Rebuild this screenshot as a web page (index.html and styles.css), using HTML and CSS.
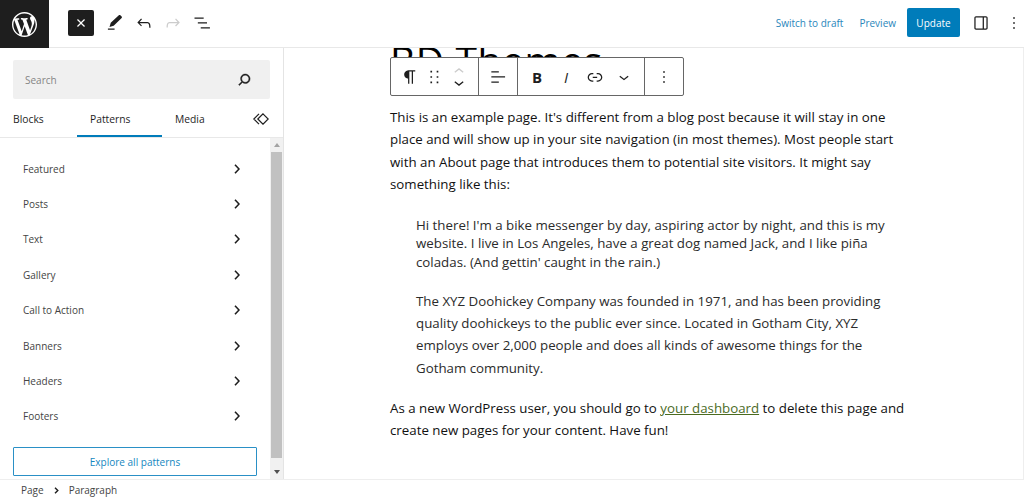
FILE: index.html
```html
<!DOCTYPE html>
<html lang="en">

<head>
    <meta charset="UTF-8">
    <meta name="viewport" content="width=device-width, initial-scale=1.0">
    <title>Edit Page</title>
    <link rel="stylesheet" href="styles.css">
</head>

<body>

    <header class="header">
        <div class="wp-logo">
            <svg viewBox="0 0 20 20" width="25" height="25"><path d="M20 10c0-5.51-4.49-10-10-10C4.48 0 0 4.49 0 10c0 5.52 4.48 10 10 10 5.51 0 10-4.48 10-10zM7.78 15.37L4.37 6.22c.55-.02 1.17-.08 1.17-.08.5-.06.44-1.13-.06-1.11 0 0-1.45.11-2.37.11-.18 0-.37 0-.58-.01C4.12 2.69 6.87 1.11 10 1.11c2.33 0 4.45.87 6.05 2.34-.68-.11-1.65.39-1.65 1.58 0 .74.45 1.36.9 2.1.35.61.55 1.36.55 2.46 0 1.49-1.4 5-1.4 5l-3.03-8.37c.54-.02.82-.17.82-.17.5-.05.44-1.25-.06-1.22 0 0-1.44.12-2.38.12-.87 0-2.33-.12-2.33-.12-.5-.03-.56 1.2-.06 1.22l.92.08 1.26 3.41zM17.41 10c.24-.64.74-1.87.43-4.25.7 1.29 1.05 2.71 1.05 4.25 0 3.29-1.73 6.24-4.4 7.78.97-2.59 1.94-5.2 2.92-7.78zM6.1 18.09C3.12 16.65 1.11 13.53 1.11 10c0-1.3.23-2.48.72-3.59C3.25 10.3 4.67 14.2 6.1 18.09zm4.03-6.63l2.58 6.98c-.86.29-1.76.45-2.71.45-.79 0-1.57-.11-2.29-.33.81-2.38 1.62-4.74 2.42-7.1z"/></svg>
        </div>
        <div class="tools">
            <button class="inserter-toggle">
                <svg viewBox="0 0 24 24" width="20" height="20"><path d="M12 13.06l3.712 3.713 1.061-1.06L13.061 12l3.712-3.712-1.06-1.06L12 10.938 8.288 7.227l-1.061 1.06L10.939 12l-3.712 3.712 1.06 1.061L12 13.061z"/></svg>
            </button>
            <svg class="icon" viewBox="0 0 24 24"><path d="M20 4.200l-1.600-1.600c-.6-.5-1.300-.4-1.800 0L6.900 11.700l-1.500 5 5-1.300L20 6c.5-.5.5-1.300 0-1.800zM11.500 18.600H3.500v1.500h8z"/></svg>
            <svg class="icon" viewBox="0 0 24 24"><path d="M18.3 11.7c-.6-.6-1.4-.9-2.3-.9H6.7l2.9-3.3-1.1-1-4.5 5L8.5 16l1-1-2.7-2.700H16c.5 0 .9.2 1.300.5 1 1 1 3.400 1 4.500v.3h1.500v-.2c0-1.500 0-4.300-1.500-5.700z"/></svg>
            <svg class="icon disabled" viewBox="0 0 24 24"><path d="M15.6 6.5l-1.1 1 2.9 3.3H8c-.9 0-1.7.3-2.3.9-1.4 1.5-1.4 4.2-1.4 5.6v.2h1.5v-.3c0-1.1 0-3.5 1-4.5.3-.3.7-.5 1.3-.5h9.2L14.5 15l1.1 1.1 4.6-4.6-4.6-5z"/></svg>
            <svg class="icon" viewBox="0 0 24 24"><path d="M3 5.5h11V7H3zM7 11.2h11v1.500H7zM10.500 17h11v1.500h-11z"/></svg>
        </div>
        <div class="settings">
            <a class="link">Switch to draft</a>
            <a class="link">Preview</a>
            <button class="update-button">Update</button>
            <svg class="icon" viewBox="0 0 24 24"><path d="M18 4H6c-1.1 0-2 .9-2 2v12c0 1.1.9 2 2 2h12c1.1 0 2-.9 2-2V6c0-1.1-.9-2-2-2zm-4 14.5H6c-.3 0-.5-.2-.5-.5V6c0-.3.2-.5.5-.5h8v13zm4.5-.5c0 .3-.2.5-.5.5h-2.500v-13H18c.3 0 .5.2.5.5v12z"/></svg>
            <svg class="icon" viewBox="0 0 24 24"><path d="M13 19h-2v-2h2v2zm0-6h-2v-2h2v2zm0-6h-2V5h2v2z"/></svg>
        </div>
    </header>

    <main class="main">
        <aside class="sidebar">
            <div class="search">
                <span>Search</span>
                <svg viewBox="0 0 24 24" width="19" height="19"><path stroke="currentColor" stroke-width=".5" d="M13 5c-3.3 0-6 2.7-6 6 0 1.4.5 2.7 1.3 3.7l-3.8 3.8 1.1 1.1 3.8-3.8c1 .8 2.3 1.3 3.7 1.3 3.3 0 6-2.700 6-6S16.300 5 13 5zm0 10.500c-2.500 0-4.500-2-4.500-4.500s2-4.500 4.500-4.500 4.500 2 4.500 4.500-2 4.500-4.500 4.500z"/></svg>
            </div>
            <nav class="tabs">
                <span class="tab">Blocks</span>
                <span class="tab active">Patterns</span>
                <span class="tab">Media</span>
                <svg class="reusable" viewBox="0 0 16 12" width="16" height="12"><path d="M10 .8L15.2 6 10 11.2 4.8 6zM6 .8L.8 6 6 11.2"/></svg>
            </nav>
            <div class="panel">
                <div class="patterns">
                    <ul class="categories">
                        <li>Featured <svg class="chevron" viewBox="0 0 6 10"><path d="M1 .8L5 5 1 9.2"/></svg></li>
                        <li>Posts <svg class="chevron" viewBox="0 0 6 10"><path d="M1 .8L5 5 1 9.2"/></svg></li>
                        <li>Text <svg class="chevron" viewBox="0 0 6 10"><path d="M1 .8L5 5 1 9.2"/></svg></li>
                        <li>Gallery <svg class="chevron" viewBox="0 0 6 10"><path d="M1 .8L5 5 1 9.2"/></svg></li>
                        <li>Call to Action <svg class="chevron" viewBox="0 0 6 10"><path d="M1 .8L5 5 1 9.2"/></svg></li>
                        <li>Banners <svg class="chevron" viewBox="0 0 6 10"><path d="M1 .8L5 5 1 9.2"/></svg></li>
                        <li>Headers <svg class="chevron" viewBox="0 0 6 10"><path d="M1 .8L5 5 1 9.2"/></svg></li>
                        <li>Footers <svg class="chevron" viewBox="0 0 6 10"><path d="M1 .8L5 5 1 9.2"/></svg></li>
                    </ul>
                    <button class="explore">Explore all patterns</button>
                </div>
                <div class="scrollbar">
                    <svg viewBox="0 0 6 4" width="6" height="4"><path fill="#a3a3a3" d="M0 4h6L3 0z"/></svg>
                    <div class="thumb"></div>
                    <svg viewBox="0 0 6 4" width="6" height="4"><path fill="#505050" d="M0 0h6L3 4z"/></svg>
                </div>
            </div>
        </aside>

        <section class="canvas">
            <h1 class="title">BD Themes</h1>
            <div class="toolbar">
                <div class="group group-block">
                    <svg class="icon" viewBox="0 0 24 24"><path d="M18.3 4H9.9v-.1l-.9.2c-2.3.4-4 2.4-4 4.8s1.7 4.4 4 4.8l.7.1V20h1.5V5.5h2.9V20h1.5V5.5h2.7V4z"/></svg>
                    <svg class="icon" viewBox="0 0 24 24"><path d="M6.500 6.500h2v-2h-2v2zm0 6.500h2v-2h-2v2zm0 6.500h2v-2h-2v2zm7.500-15v2h2v-2h-2zm0 8.500h2v-2h-2v2zm0 6.500h2v-2h-2v2z"/></svg>
                    <span class="movers">
                        <svg class="disabled" viewBox="0 0 10 5"><path d="M.8 4.3L5 .9l4.2 3.4"/></svg>
                        <svg viewBox="0 0 10 5"><path d="M.8 .7L5 4.1 9.2 .7"/></svg>
                    </span>
                </div>
                <div class="group group-align">
                    <svg class="icon" viewBox="0 0 24 24"><path d="M4 5h9v1.5H4zM4 11.2h16.5v1.5H4zM4 17.5h9V19H4z"/></svg>
                </div>
                <div class="group group-format">
                    <span class="bold">B</span>
                    <span class="italic">I</span>
                    <svg class="icon" viewBox="0 0 24 24"><path d="M15.6 7.2H14v1.5h1.6c2 0 3.7 1.7 3.7 3.7s-1.7 3.7-3.7 3.7H14v1.5h1.6c2.8 0 5.2-2.3 5.2-5.2 0-2.9-2.3-5.2-5.2-5.2zM4.7 12.4c0-2 1.7-3.7 3.7-3.7H10V7.2H8.4c-2.9 0-5.2 2.3-5.2 5.2 0 2.9 2.3 5.2 5.2 5.2H10v-1.5H8.4c-2 0-3.700-1.700-3.700-3.700zm4.600.9h5.300v-1.500H9.300v1.500z"/></svg>
                    <svg class="icon" viewBox="0 0 24 24"><path d="M17.5 11.6L12 16l-5.5-4.4.9-1.2L12 14l4.5-3.6 1 1.2z"/></svg>
                </div>
                <div class="group group-more">
                    <svg class="icon" viewBox="0 0 24 24"><path d="M13 19h-2v-2h2v2zm0-6h-2v-2h2v2zm0-6h-2V5h2v2z"/></svg>
                </div>
            </div>
            <div class="content">
                <p>This is an example page. It's different from a blog post because it will stay in one<br>place and will show up in your site navigation (in most themes). Most people start<br>with an About page that introduces them to potential site visitors. It might say<br>something like this:</p>
                <blockquote class="quote-tight">Hi there! I'm a bike messenger by day, aspiring actor by night, and this is my<br>website. I live in Los Angeles, have a great dog named Jack, and I like piña<br>coladas. (And gettin' caught in the rain.)</blockquote>
                <blockquote>The XYZ Doohickey Company was founded in 1971, and has been providing<br>quality doohickeys to the public ever since. Located in Gotham City, XYZ<br>employs over 2,000 people and does all kinds of awesome things for the<br>Gotham community.</blockquote>
                <p>As a new WordPress user, you should go to <a class="dashboard-link">your dashboard</a> to delete this page and<br>create new pages for your content. Have fun!</p>
            </div>
        </section>
    </main>

    <footer class="footer">
        <span>Page</span>
        <svg viewBox="0 0 5 7" width="5" height="7"><path d="M1 .7L3.8 3.5 1 6.3"/></svg>
        <span>Paragraph</span>
    </footer>

</body>

</html>
```
FILE: styles.css
```css
* {
    box-sizing: border-box;
}

body {
    margin: 0;
    width: 1024px;
    height: 498px;
    overflow: hidden;
    display: flex;
    flex-direction: column;
    background-color: #fff;
    color: #1e1e1e;
    font-family: "Open Sans", "Noto Sans", sans-serif;
    font-size: 10px;
}

button {
    font: inherit;
    border: none;
    padding: 0;
}

svg {
    display: block;
    flex: none;
    fill: currentColor;
}

.icon {
    width: 20px;
    height: 20px;
}

.disabled {
    color: #ccc;
}

/* Header */
.header {
    display: flex;
    flex: none;
    height: 48px;
    border-bottom: 1px solid #e8e8e8;
}

.wp-logo {
    width: 49px;
    height: 48px;
    display: flex;
    align-items: center;
    justify-content: center;
    background-color: #1e1e1e;
    color: #fff;
}

.tools {
    display: flex;
    align-items: center;
    gap: 9px;
    padding: 0 0 2px 19px;
}

.inserter-toggle {
    width: 26px;
    height: 26px;
    margin-right: 2px;
    display: flex;
    align-items: center;
    justify-content: center;
    background-color: #1e1e1e;
    color: #fff;
    border-radius: 2px;
}

.settings {
    display: flex;
    align-items: center;
    margin-left: auto;
    padding-bottom: 2px;
}

.link {
    margin-right: 16px;
    color: #2a86bb;
}

.update-button {
    width: 53px;
    height: 29px;
    margin: 0 11px 0 -5px;
    background-color: #007cba;
    color: #fff;
    border-radius: 2px;
}

.settings .icon:last-child {
    margin-left: 13px;
}

/* Main area */
.main {
    display: flex;
    flex: none;
    height: 432px;
    border-bottom: 1px solid #eee;
}

.sidebar {
    width: 284px;
    display: flex;
    flex-direction: column;
    border-right: 1px solid #e4e4e4;
}

.search {
    display: flex;
    align-items: center;
    justify-content: space-between;
    width: 257px;
    height: 39px;
    margin: 12px 0 0 13px;
    padding: 0 16px 0 12px;
    background-color: #f0f0f0;
    border-radius: 2px;
    color: #858585;
}

.search svg {
    color: #1e1e1e;
}

.tabs {
    display: flex;
    flex: none;
    height: 39px;
    border-bottom: 1px solid #e8e8e8;
    font-size: 10.3px;
    font-weight: 500;
}

.tab {
    width: 85px;
    padding: 13px 13px 0;
}

.tab:first-child {
    width: 77px;
}

.tab.active {
    border-bottom: 2px solid #007cba;
}

.reusable {
    margin: 14px 0 0 6px;
    fill: none;
    stroke: #1e1e1e;
    stroke-width: 1.2;
}

.panel {
    display: flex;
    flex: 1;
}

.patterns {
    width: 270px;
    padding: 13px 13px 0;
}

.categories {
    margin: 0;
    padding: 0;
    list-style: none;
    color: #444;
}

.categories li {
    display: flex;
    align-items: center;
    justify-content: space-between;
    height: 35.4px;
    padding: 0 17px 0 10px;
}

.chevron {
    width: 6px;
    height: 10px;
    fill: none;
    stroke: #1e1e1e;
    stroke-width: 1.6;
}

.explore {
    width: 244px;
    height: 29px;
    margin-top: 13px;
    border: 1px solid #2a90c6;
    border-radius: 1px;
    background-color: #fff;
    color: #1587c0;
}

.scrollbar {
    width: 13px;
    display: flex;
    flex-direction: column;
    align-items: center;
    justify-content: space-between;
    padding: 5px 0;
    background-color: #f1f1f1;
}

.thumb {
    width: 11px;
    height: 306px;
    margin-bottom: 8px;
    background-color: #c1c1c1;
}

/* Canvas */
.canvas {
    position: relative;
    flex: 1;
    overflow: hidden;
    padding: 0 0 0 106px;
    border-right: 1px solid #eee;
    color: #111;
}

.title {
    height: 71px;
    margin: -13px 0 0;
    font-size: 39px;
    font-weight: 400;
    line-height: 50px;
    letter-spacing: .6px;
    color: #000;
}

/* Floats over the title */
.toolbar {
    position: absolute;
    left: 106px;
    top: 9px;
    display: flex;
    width: 294px;
    height: 39px;
    background-color: #fff;
    border: 1px solid #666;
    border-radius: 2px;
    color: #1e1e1e;
}

.group {
    display: flex;
    align-items: center;
    border-right: 1px solid #666;
}

.group:last-child {
    border-right: none;
}

.group-block {
    width: 88px;
    padding-left: 9px;
    gap: 5px;
}

.movers {
    display: flex;
    flex-direction: column;
    gap: 8px;
    margin-left: 4px;
}

.movers svg {
    width: 10px;
    height: 5px;
    fill: none;
    stroke: currentColor;
    stroke-width: 1.3;
}

.group-align {
    width: 39px;
    justify-content: center;
}

.group-format {
    width: 127px;
    padding-left: 9px;
    gap: 9px;
}

.bold,
.italic {
    width: 20px;
    text-align: center;
    font-size: 15px;
}

.bold {
    font-weight: 700;
}

.italic {
    font-style: italic;
}

.group-more {
    flex: 1;
    justify-content: center;
}

.content {
    margin-top: -10px;
    padding-top: 10px;
    font-size: 13.3px;
    line-height: 22.3px;
}

.content p,
.content blockquote {
    margin: 0;
    white-space: nowrap;
}

.content blockquote {
    margin: 19px 0 18px 26px;
    color: #2b2b2b;
}

.content .quote-tight {
    margin-top: 21px;
    line-height: 18.2px;
}

.dashboard-link {
    color: #4b6b1f;
    text-decoration: underline;
}

/* Breadcrumb */
.footer {
    display: flex;
    align-items: center;
    gap: 10px;
    height: 18px;
    padding: 2px 0 0 21px;
    color: #444;
}

.footer svg {
    fill: none;
    stroke: #1e1e1e;
    stroke-width: 1.4;
}
```
